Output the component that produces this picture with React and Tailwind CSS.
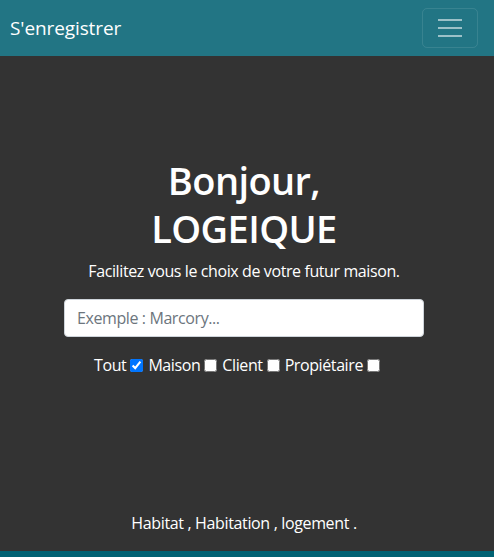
import React from 'react';

export default function App() {
  const filters = [
    { label: 'Tout', checked: true },
    { label: 'Maison', checked: false },
    { label: 'Client', checked: false },
    { label: 'Propiétaire', checked: false },
  ];

  return (
    <div className="min-h-[557px] bg-[#333333] text-white flex flex-col" style={{ fontFamily: '"Open Sans", "Noto Sans", sans-serif' }}>
      <nav className="h-14 bg-[#227584] flex items-center justify-between pl-[10px] pr-4">
        <span className="text-[19px] tracking-[-0.1px]">S'enregistrer</span>
        <button className="w-[56px] h-[40px] border border-white/10 rounded-[5px] flex flex-col items-center justify-center gap-[6px]">
          <span className="block w-[24px] h-[2px] bg-white/55" />
          <span className="block w-[24px] h-[2px] bg-white/55" />
          <span className="block w-[24px] h-[2px] bg-white/55" />
        </button>
      </nav>

      <main className="flex-1 flex flex-col items-center pr-[6px]">
        <h1 className="mt-[100px] text-[38px] leading-[48px] font-semibold text-center tracking-[-0.6px]">
          Bonjour,
          <br />
          LOGEIQUE
        </h1>
        <p className="mt-[7px] text-[16px] leading-6 tracking-[-0.4px]">Facilitez vous le choix de votre futur maison.</p>
        <input
          type="text"
          placeholder="Exemple : Marcory..."
          className="mt-4 w-[360px] h-[38px] rounded-[4px] bg-white border border-[#ced4da] px-3 text-[16px] text-[#495057] placeholder:text-[#6c757d] tracking-[-0.4px] outline-none"
        />
        <div className="mt-4 h-6 flex items-center pr-[9px] text-[16px] tracking-[-0.4px]">
          {filters.map((f) => (
            <label key={f.label} className="flex items-center mr-[5px]">
              <span>{f.label}</span>
              <input type="checkbox" defaultChecked={f.checked} className="ml-[4px] w-[13px] h-[13px] accent-[#0075ff]" />
            </label>
          ))}
        </div>
        <p className="mt-auto mb-4 text-[16px] leading-6 tracking-[-0.35px]">Habitat , Habitation , logement .</p>
      </main>

      <div className="h-[6px] bg-[#006273]" />
    </div>
  );
}
